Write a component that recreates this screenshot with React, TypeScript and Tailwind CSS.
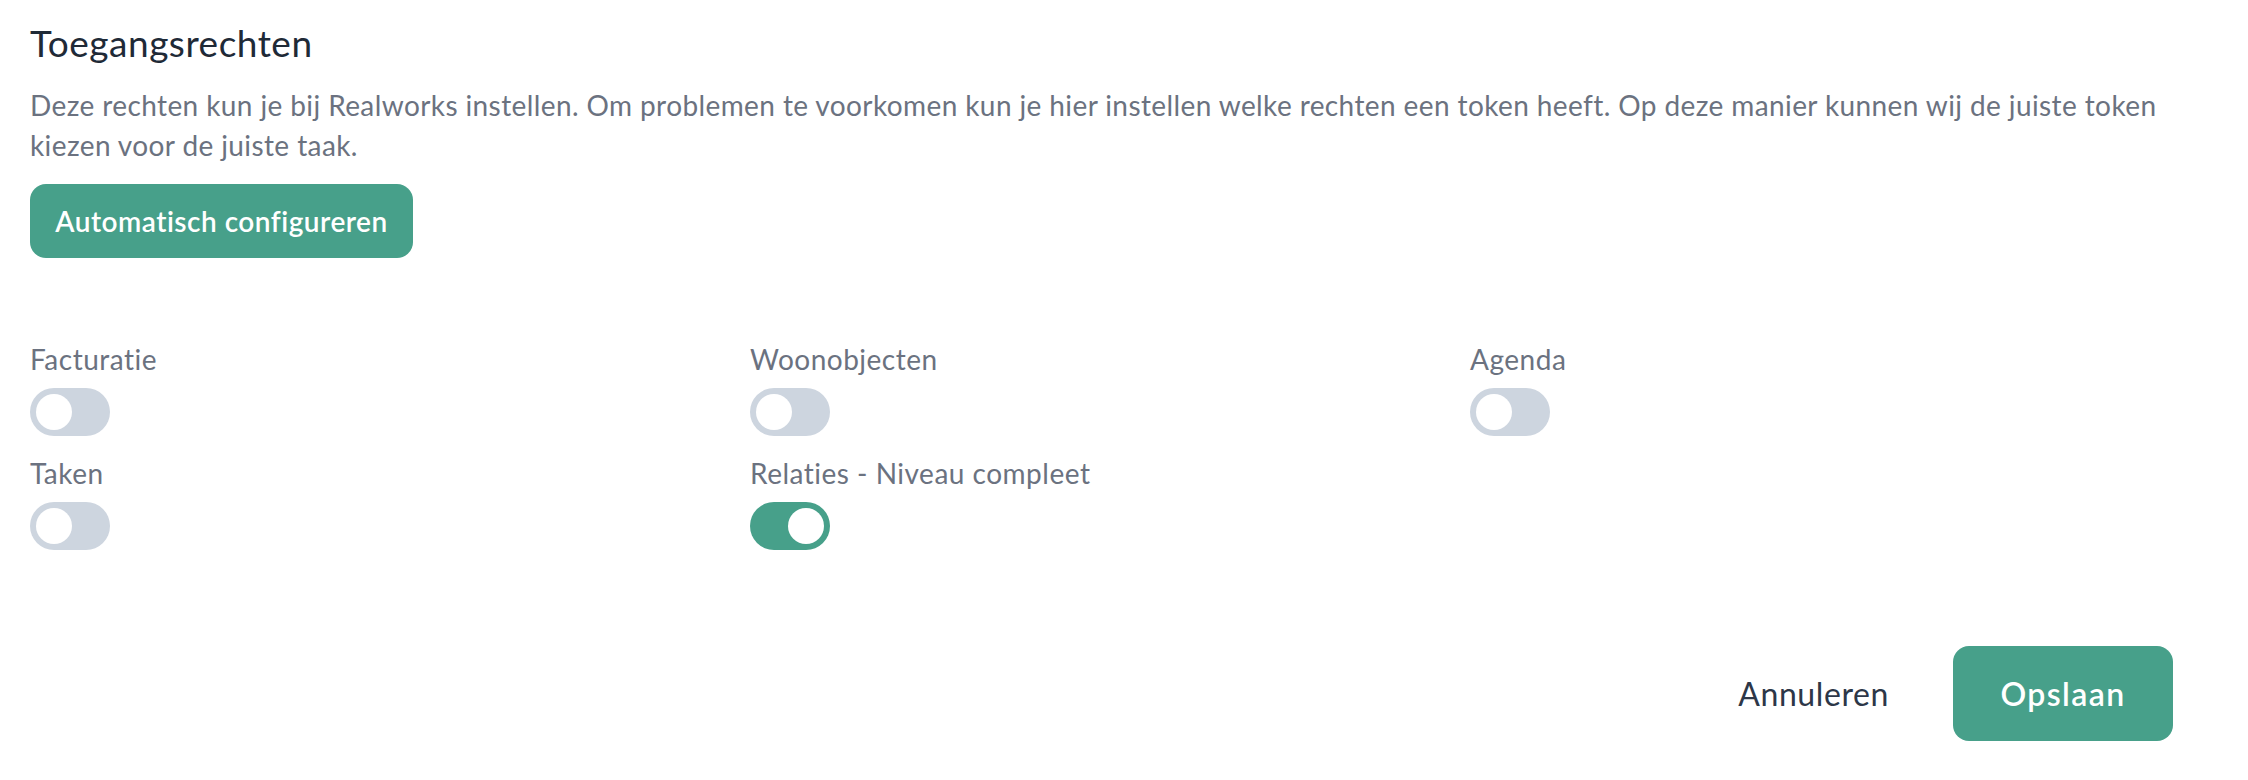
import { useState } from 'react'

// Permission toggles shown in the grid
const initialRights = [
  { key: 'facturatie', label: 'Facturatie', enabled: false },
  { key: 'woonobjecten', label: 'Woonobjecten', enabled: false },
  { key: 'agenda', label: 'Agenda', enabled: false },
  { key: 'taken', label: 'Taken', enabled: false },
  { key: 'relaties', label: 'Relaties - Niveau compleet', enabled: true },
]

function Toggle({ enabled, onChange }: { enabled: boolean; onChange: () => void }) {
  return (
    <button
      type="button"
      role="switch"
      aria-checked={enabled}
      onClick={onChange}
      className={`mt-[9px] flex h-[48px] w-[80px] items-center rounded-full px-[6px] ${
        enabled ? 'justify-end bg-[#47a08a]' : 'justify-start bg-[#cdd5df]'
      }`}
    >
      <span className="block h-[36px] w-[36px] rounded-full bg-white" />
    </button>
  )
}

export default function App() {
  const [rights, setRights] = useState(initialRights)

  const toggleRight = (key: string) => {
    setRights(prev => prev.map(r => (r.key === key ? { ...r, enabled: !r.enabled } : r)))
  }

  return (
    <div className="min-h-screen bg-white px-[30px] pt-[15px] font-['Lato','Open_Sans',sans-serif]">
      <h2 className="text-[37px] leading-[56px] tracking-[0.5px] text-[#1f2a37]">Toegangsrechten</h2>

      <p className="mt-[14px] w-[2188px] text-[28px] leading-[40px] tracking-[0.4px] text-[#6b7280]">
        Deze rechten kun je bij Realworks instellen. Om problemen te voorkomen kun je hier instellen welke rechten een
        token heeft. Op deze manier kunnen wij de juiste token kiezen voor de juiste taak.
      </p>

      <button
        type="button"
        className="mt-[19px] h-[74px] w-[383px] rounded-[16px] bg-[#47a08a] text-[28px] font-semibold tracking-[0.5px] text-white"
      >
        Automatisch configureren
      </button>

      {/* Rights grid */}
      <div className="mt-[81px] grid grid-cols-[720px_720px_720px] gap-y-[17px]">
        {rights.map(right => (
          <div key={right.key} className="flex flex-col items-start">
            <span className="text-[28px] leading-[40px] tracking-[0.5px] text-[#6b7280]">{right.label}</span>
            <Toggle enabled={right.enabled} onChange={() => toggleRight(right.key)} />
          </div>
        ))}
      </div>

      <div className="mt-[96px] flex items-center justify-end pr-[45px]">
        <button type="button" className="mr-[64px] text-[32px] tracking-[0.6px] text-[#2d3748]">
          Annuleren
        </button>
        <button
          type="button"
          className="h-[95px] w-[220px] rounded-[16px] bg-[#47a08a] text-[32px] font-semibold tracking-[1.4px] text-white"
        >
          Opslaan
        </button>
      </div>
    </div>
  )
}
